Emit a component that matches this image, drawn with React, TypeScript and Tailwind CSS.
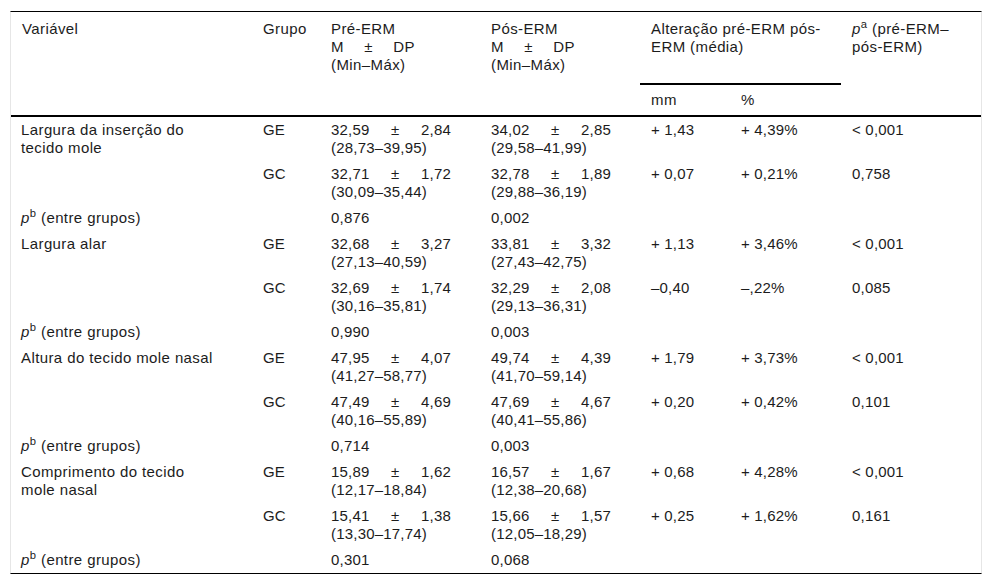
import React from "react";

type Stat = { m: string; sd: string; range: string };

type Row = {
  label?: React.ReactNode;
  group: "GE" | "GC";
  pre: Stat;
  pos: Stat;
  mm: string;
  pct: string;
  p: string;
};

type Block = { rows: [Row, Row]; pPre: string; pPos: string };

const blocks: Block[] = [
  {
    rows: [
      {
        label: (<>Largura da inserção do<br />tecido mole</>),
        group: "GE",
        pre: { m: "32,59", sd: "2,84", range: "(28,73–39,95)" },
        pos: { m: "34,02", sd: "2,85", range: "(29,58–41,99)" },
        mm: "+ 1,43", pct: "+ 4,39%", p: "< 0,001",
      },
      {
        group: "GC",
        pre: { m: "32,71", sd: "1,72", range: "(30,09–35,44)" },
        pos: { m: "32,78", sd: "1,89", range: "(29,88–36,19)" },
        mm: "+ 0,07", pct: "+ 0,21%", p: "0,758",
      },
    ],
    pPre: "0,876", pPos: "0,002",
  },
  {
    rows: [
      {
        label: "Largura alar",
        group: "GE",
        pre: { m: "32,68", sd: "3,27", range: "(27,13–40,59)" },
        pos: { m: "33,81", sd: "3,32", range: "(27,43–42,75)" },
        mm: "+ 1,13", pct: "+ 3,46%", p: "< 0,001",
      },
      {
        group: "GC",
        pre: { m: "32,69", sd: "1,74", range: "(30,16–35,81)" },
        pos: { m: "32,29", sd: "2,08", range: "(29,13–36,31)" },
        mm: "–0,40", pct: "–,22%", p: "0,085",
      },
    ],
    pPre: "0,990", pPos: "0,003",
  },
  {
    rows: [
      {
        label: "Altura do tecido mole nasal",
        group: "GE",
        pre: { m: "47,95", sd: "4,07", range: "(41,27–58,77)" },
        pos: { m: "49,74", sd: "4,39", range: "(41,70–59,14)" },
        mm: "+ 1,79", pct: "+ 3,73%", p: "< 0,001",
      },
      {
        group: "GC",
        pre: { m: "47,49", sd: "4,69", range: "(40,16–55,89)" },
        pos: { m: "47,69", sd: "4,67", range: "(40,41–55,86)" },
        mm: "+ 0,20", pct: "+ 0,42%", p: "0,101",
      },
    ],
    pPre: "0,714", pPos: "0,003",
  },
  {
    rows: [
      {
        label: (<>Comprimento do tecido<br />mole nasal</>),
        group: "GE",
        pre: { m: "15,89", sd: "1,62", range: "(12,17–18,84)" },
        pos: { m: "16,57", sd: "1,67", range: "(12,38–20,68)" },
        mm: "+ 0,68", pct: "+ 4,28%", p: "< 0,001",
      },
      {
        group: "GC",
        pre: { m: "15,41", sd: "1,38", range: "(13,30–17,74)" },
        pos: { m: "15,66", sd: "1,57", range: "(12,05–18,29)" },
        mm: "+ 0,25", pct: "+ 1,62%", p: "0,161",
      },
    ],
    pPre: "0,301", pPos: "0,068",
  },
];

// body cells: top aligned, thin vertical padding
const td = "align-top pl-[11px] pr-[6px] pt-[4px] pb-[4px]";
const tdFirst = "align-top pl-[10px] pr-[6px] pt-[4px] pb-[4px] tracking-[0.4px]";
const th = "align-top text-left font-normal pl-[11px] pr-[6px] pt-[8px] border-b-2 border-black tracking-[0.4px]";
const thSub = "align-top text-left font-normal pl-[11px] pt-[6px] pb-[6px] border-b-2 border-black tracking-[0.4px]";

function StatCell({ s }: { s: Stat }) {
  return (
    <div className="w-[120px]">
      <div className="flex justify-between">
        <span>{s.m}</span>
        <span>±</span>
        <span>{s.sd}</span>
      </div>
      <div>{s.range}</div>
    </div>
  );
}

function PLabel({ sup }: { sup: string }) {
  return (
    <>
      <i>p</i>
      <sup>{sup}</sup>
    </>
  );
}

function MDP() {
  return (
    <div className="flex w-[84px] justify-between">
      <span>M</span><span>±</span><span>DP</span>
    </div>
  );
}

export default function App() {
  return (
    <div
      className="min-h-screen w-full bg-white pt-[11px] pl-[10px] text-[15px] leading-[18px] tracking-[0.2px] text-[#1c1c1c]"
      style={{ fontFamily: '"Liberation Sans", Arial, sans-serif' }}
    >
      <div className="w-[972px] border-x border-x-[#e6e6e6] border-t border-t-black border-b border-b-black">
        <table className="w-full table-fixed border-separate border-spacing-0">
          <colgroup>
            <col className="w-[241px]" />
            <col className="w-[68px]" />
            <col className="w-[160px]" />
            <col className="w-[160px]" />
            <col className="w-[90px]" />
            <col className="w-[111px]" />
            <col className="w-[140px]" />
          </colgroup>
          <thead>
            <tr>
              <th rowSpan={2} className={th + " pl-[10px]"}>Variável</th>
              <th rowSpan={2} className={th}>Grupo</th>
              <th rowSpan={2} className={th}>
                Pré-ERM
                <MDP />
                (Min–Máx)
              </th>
              <th rowSpan={2} className={th}>
                Pós-ERM
                <MDP />
                (Min–Máx)
              </th>
              <th colSpan={2} className={th + " pb-[27px]"}>
                Alteração pré-ERM pós-<br />ERM (média)
              </th>
              <th rowSpan={2} className={th}>
                <PLabel sup="a" /> (pré-ERM–<br />pós-ERM)
              </th>
            </tr>
            <tr>
              <th className={thSub}>mm</th>
              <th className={thSub}>%</th>
            </tr>
          </thead>
          <tbody>
            {blocks.map((b, i) => (
              <React.Fragment key={i}>
                {b.rows.map((r) => (
                  <tr key={r.group}>
                    <td className={tdFirst}>{r.label}</td>
                    <td className={td}>{r.group}</td>
                    <td className={td}><StatCell s={r.pre} /></td>
                    <td className={td}><StatCell s={r.pos} /></td>
                    <td className={td}>{r.mm}</td>
                    <td className={td}>{r.pct}</td>
                    <td className={td}>{r.p}</td>
                  </tr>
                ))}
                <tr>
                  <td className={tdFirst}><PLabel sup="b" /> (entre grupos)</td>
                  <td className={td}></td>
                  <td className={td}>{b.pPre}</td>
                  <td className={td}>{b.pPos}</td>
                  <td className={td}></td>
                  <td className={td}></td>
                  <td className={td}></td>
                </tr>
              </React.Fragment>
            ))}
          </tbody>
        </table>
      </div>
    </div>
  );
}
